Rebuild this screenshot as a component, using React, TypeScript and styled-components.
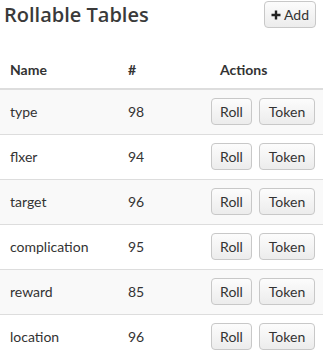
import React from "react";
import styled, { createGlobalStyle } from "styled-components";

const Global = createGlobalStyle`
  html, body { margin: 0; padding: 0; background: #fff; }
  body { font-family: "Lato", "Noto Sans", sans-serif; color: #333; }
  * { box-sizing: border-box; }
`;

const Page = styled.div`
  width: 323px;
`;

const TopBar = styled.div`
  display: flex;
  align-items: center;
  justify-content: space-between;
  padding: 1px 7px 0 4px;
  height: 28px;
`;

const Title = styled.h3`
  margin: 0;
  font-family: "Open Sans", "Lato", sans-serif;
  font-size: 20px;
  font-weight: 600;
  color: #3a3a3a;
  line-height: 24px;
`;

const Button = styled.button<{ $w?: number }>`
  height: 27px;
  padding: 0 8px;
  border: 1px solid #c8c8c8;
  border-radius: 4px;
  background: linear-gradient(#fcfcfc, #ececec);
  color: #333;
  font-family: "Lato", "Noto Sans", sans-serif;
  font-size: 14px;
  display: inline-flex;
  align-items: center;
  justify-content: center;
  gap: 3px;
  cursor: pointer;
  width: ${(p) => (p.$w ? `${p.$w}px` : "auto")};

  svg { flex-shrink: 0; }
`;

const Table = styled.table`
  margin-top: 24px;
  width: 100%;
  border-collapse: collapse;
  font-size: 14px;
`;

const Th = styled.th<{ $pl?: number }>`
  text-align: left;
  font-weight: 700;
  padding: 8px 8px 8px ${(p) => p.$pl ?? 10}px;
  line-height: 20px;
  border-bottom: 2px solid #dddddd;
`;

const Row = styled.tr<{ $striped: boolean }>`
  background: ${(p) => (p.$striped ? "#f9f9f9" : "#ffffff")};
  border-bottom: 1px solid #dddddd;
`;

const Td = styled.td<{ $pl?: number }>`
  height: 45px;
  padding: 0 8px 0 ${(p) => p.$pl ?? 10}px;
  vertical-align: middle;
`;

const Actions = styled.div`
  display: flex;
  gap: 7px;
`;

const rows: [string, number][] = [
  ["type", 98],
  ["flxer", 94],
  ["target", 96],
  ["complication", 95],
  ["reward", 85],
  ["location", 96],
];

export default function App() {
  return (
    <Page>
      <Global />
      <TopBar>
        <Title>Rollable Tables</Title>
        <Button $w={52}>
          <svg width="10" height="10" viewBox="0 0 10 10">
            <path d="M5 0.5v9M0.5 5h9" stroke="#222" strokeWidth="2.4" />
          </svg>
          Add
        </Button>
      </TopBar>
      <Table>
        <thead>
          <tr>
            <Th style={{ width: 118 }}>Name</Th>
            <Th $pl={10} style={{ width: 83 }}>#</Th>
            <Th $pl={19}>Actions</Th>
          </tr>
        </thead>
        <tbody>
          {rows.map(([name, n], i) => (
            <Row key={name} $striped={i % 2 === 0}>
              <Td>{name}</Td>
              <Td>{n}</Td>
              <Td $pl={10}>
                <Actions>
                  <Button $w={41}>Roll</Button>
                  <Button $w={56}>Token</Button>
                </Actions>
              </Td>
            </Row>
          ))}
        </tbody>
      </Table>
    </Page>
  );
}
